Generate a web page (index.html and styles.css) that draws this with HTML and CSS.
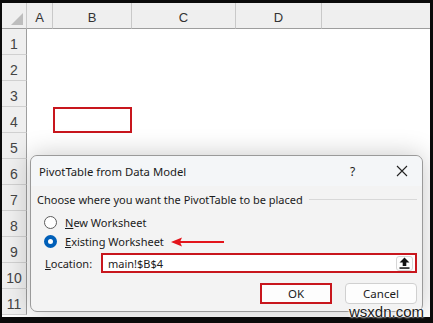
FILE: index.html
```html
<html>
<head>
  <title>PivotTable from Data Model</title>
  <meta http-equiv="Content-Type" content="text/html; charset=utf-8">
  <link rel="stylesheet" href="styles.css">
</head>
<body>
  <div class="frame">
    <div class="sheet">
      <div class="corner"><span class="corner-tri"></span></div>
      <div class="col-head">A</div>
      <div class="col-head">B</div>
      <div class="col-head">C</div>
      <div class="col-head">D</div>
      <div class="col-head last"></div>

      <div class="row-head">1</div>
      <div class="row-head">2</div>
      <div class="row-head">3</div>
      <div class="row-head">4</div>
      <div class="row-head">5</div>
      <div class="row-head">6</div>
      <div class="row-head">7</div>
      <div class="row-head">8</div>
      <div class="row-head">9</div>
      <div class="row-head">10</div>
      <div class="row-head">11</div>

      <div class="cell-mark"></div>
    </div>

    <div class="dialog">
      <div class="dlg-title">
        <span class="dlg-name">PivotTable from Data Model</span>
        <span class="dlg-help">?</span>
        <svg class="dlg-close" width="12" height="12" viewBox="0 0 12 12">
          <path d="M1 1 L11 11 M11 1 L1 11" stroke="#222" stroke-width="1.1" fill="none"/>
        </svg>
      </div>
      <div class="dlg-body">
        <div class="group-head">
          <span>Choose where you want the PivotTable to be placed</span>
          <span class="group-line"></span>
        </div>
        <div class="radio-row">
          <span class="radio"></span>
          <span><u>N</u>ew Worksheet</span>
        </div>
        <div class="radio-row">
          <span class="radio checked"></span>
          <span><u>E</u>xisting Worksheet</span>
          <svg class="pointer" width="54" height="10" viewBox="0 0 54 10">
            <path d="M8 5 L53 5" stroke="#e3141b" stroke-width="2" fill="none"/>
            <path d="M0 5 L11 0.5 L9 5 L11 9.5 Z" fill="#e3141b"/>
          </svg>
        </div>
        <div class="loc-row">
          <span class="loc-label"><u>L</u>ocation:</span>
          <div class="loc-box">
            <span class="loc-text">main!$B$4</span>
            <span class="loc-btn">
              <svg width="11" height="12" viewBox="0 0 11 12">
                <path d="M5.5 0.5 L10.5 5.5 L7.3 5.5 L7.3 9 L3.7 9 L3.7 5.5 L0.5 5.5 Z" fill="#111"/>
                <rect x="0.5" y="10.3" width="10" height="1.5" fill="#111"/>
              </svg>
            </span>
          </div>
        </div>
        <div class="btn-row">
          <span class="btn btn-ok">OK</span>
          <span class="btn">Cancel</span>
        </div>
      </div>
    </div>

    <div class="watermark">wsxdn.com</div>
  </div>
</body>
</html>
```

FILE: styles.css
```css
html {
  box-sizing: border-box;
}
*, *:before, *:after {
  box-sizing: inherit;
}
body {
  margin: 0;
  padding: 0;
  background: #000;
  font-family: "Noto Sans", "Open Sans", sans-serif;
}
.frame {
  position: relative;
  width: 433px;
  height: 323px;
  padding: 3px 3px 6px 2px;
  background: #0b0b0b;
  overflow: hidden;
}
.sheet {
  display: grid;
  grid-template-columns: 25px 26px 79px 104px 86px 1fr;
  grid-template-rows: 26px repeat(11, 26px);
  height: 100%;
  background: #fff;
  overflow: hidden;
  font-family: "Liberation Sans", Arial, sans-serif;
  font-size: 13px;
  color: #333;
}
.corner {
  grid-row: 1;
  grid-column: 1;
  position: relative;
  background: #efefef;
  border-right: 1px solid #c9c9c9;
  border-bottom: 1px solid #9e9e9e;
}
.corner-tri {
  position: absolute;
  right: 3px;
  bottom: 3px;
  width: 0;
  height: 0;
  border-left: 12px solid transparent;
  border-bottom: 12px solid #bdbdbd;
}
.col-head {
  grid-row: 1;
  display: flex;
  align-items: flex-end;
  justify-content: center;
  padding-bottom: 3px;
  background: #efefef;
  border-right: 1px solid #c9c9c9;
  border-bottom: 1px solid #9e9e9e;
}
.col-head.last {
  border-right: none;
}
.row-head {
  grid-column: 1;
  display: flex;
  align-items: flex-end;
  justify-content: center;
  padding-bottom: 2px;
  background: #efefef;
  border-right: 1px solid #9e9e9e;
  border-bottom: 1px solid #d0d0d0;
  font-size: 14px;
  color: #444;
}
.cell-mark {
  grid-row: 5;
  grid-column: 3;
  border: 2px solid #c8161d;
}
.dialog {
  position: absolute;
  left: 30px;
  top: 155px;
  width: 393px;
  height: 157px;
  background: #f3f3f3;
  border: 1px solid #9a9a9a;
  border-radius: 7px;
  box-shadow: 0 0 26px rgba(0, 0, 0, 0.22);
  font-size: 11px;
  color: #1b1b1b;
}
.dlg-title {
  display: flex;
  align-items: center;
  height: 30px;
  padding-left: 8px;
  border-radius: 7px 7px 0 0;
  background: #f4f6f8;
}
.dlg-name {
  flex: 1;
  font-size: 11.3px;
}
.dlg-help {
  width: 12px;
  font-size: 12px;
}
.dlg-close {
  margin: 0 14px 0 34px;
}
.dlg-body {
  padding: 0 5px 0 6px;
}
.group-head {
  display: flex;
  align-items: center;
  height: 27px;
}
.group-line {
  flex: 1;
  height: 1px;
  margin-left: 6px;
  background: #d8d8d8;
}
.radio-row {
  display: flex;
  align-items: center;
  height: 19px;
  padding-left: 7px;
}
.radio {
  width: 13px;
  height: 13px;
  margin-right: 8px;
  border: 1px solid #5c5c5c;
  border-radius: 50%;
  background: #fff;
}
.radio.checked {
  border: 4px solid #005fb8;
  background: #fff;
}
.pointer {
  margin-left: 7px;
}
.loc-row {
  display: flex;
  align-items: center;
  height: 20px;
  margin-top: 2px;
}
.loc-label {
  width: 64px;
  padding-left: 8px;
}
.loc-box {
  flex: 1;
  display: flex;
  align-items: center;
  height: 20px;
  padding: 0 2px 0 5px;
  background: #fff;
  border: 2px solid #c8161d;
}
.loc-text {
  flex: 1;
}
.loc-btn {
  display: flex;
  align-items: center;
  justify-content: center;
  width: 17px;
  height: 15px;
  border: 1px solid #d6d6d6;
  border-radius: 3px;
  background: #fdfdfd;
}
.btn-row {
  display: flex;
  justify-content: flex-end;
  gap: 13px;
  margin-top: 10px;
}
.btn {
  display: flex;
  align-items: center;
  justify-content: center;
  width: 72px;
  height: 21px;
  background: #fdfdfd;
  border: 1px solid #d0d0d0;
  border-radius: 4px;
  font-size: 11.5px;
}
.btn-ok {
  border: 2px solid #c8161d;
  border-radius: 0;
}
.watermark {
  position: absolute;
  right: 9px;
  bottom: 3px;
  font-family: "Liberation Sans", Arial, sans-serif;
  font-size: 15px;
  color: #1a1a1a;
  text-shadow: 0 0 2px #fff, 0 0 2px #fff, 0 0 3px #fff;
}
```
